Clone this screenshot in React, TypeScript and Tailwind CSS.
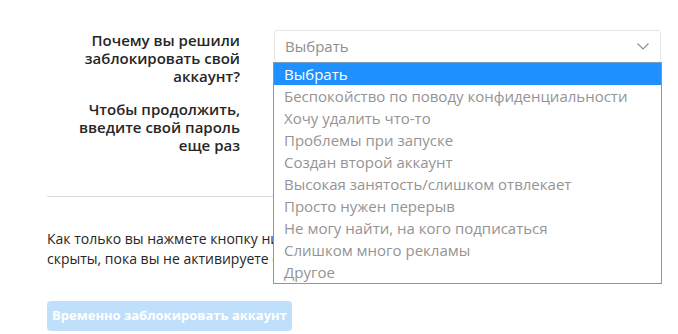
import React from "react";

const options = [
  "Выбрать",
  "Беспокойство по поводу конфиденциальности",
  "Хочу удалить что-то",
  "Проблемы при запуске",
  "Создан второй аккаунт",
  "Высокая занятость/слишком отвлекает",
  "Просто нужен перерыв",
  "Не могу найти, на кого подписаться",
  "Слишком много рекламы",
  "Другое",
];

const App: React.FC = () => {
  return (
    <div
      className="relative w-[678px] h-[334px] bg-white overflow-hidden text-[#262626]"
      style={{ fontFamily: '"Open Sans", "Noto Sans", sans-serif' }}
    >
      <div className="pl-[47px] pt-[30px]">
        <div className="flex">
          <div className="w-[194px] shrink-0 pr-[1px] text-right text-[15px] font-semibold leading-[18px] pt-[1px]">
            Почему вы решили заблокировать свой аккаунт?
          </div>
          <div className="relative ml-[33px] w-[387px] shrink-0">
            <div className="h-[33px] border border-[#e6e6e6] rounded-[3px] flex items-center justify-between pl-[10px] pr-[11px] text-[15px] text-[#8e8e8e]">
              <span>Выбрать</span>
              <svg width="12" height="7" viewBox="0 0 12 7" fill="none">
                <path d="M0.5 0.5l5.5 5.5 5.5-5.5" stroke="#8e8e8e" strokeWidth="1.1" />
              </svg>
            </div>
          </div>
        </div>
        <div className="flex mt-[15px]">
          <div className="w-[194px] shrink-0 pr-[1px] text-right text-[15px] font-semibold leading-[18px]">
            Чтобы продолжить, введите свой пароль еще раз
          </div>
        </div>
        <div className="w-[600px] mt-[42px] border-t border-[#dbdbdb]" />
        <div className="mt-[32px] text-[14px] leading-[20px] whitespace-nowrap">
          <div>Как только вы нажмете кнопку ниже, ваши фото, комментарии и отметки</div>
          <div>скрыты, пока вы не активируете свой аккаунт, выполнив вход.</div>
        </div>
        <button className="block mt-[32px] h-[30px] w-[245px] rounded-[4px] bg-[#c0dffb] text-white text-[13px] font-bold">
          Временно заблокировать аккаунт
        </button>
      </div>

      <div className="absolute z-10 left-[273px] top-[62px] w-[389px] border border-[#7a9cbc] bg-white text-[15px] text-[#949494]">
        {options.map((o, i) => (
          <div
            key={o}
            className={
              i === 0
                ? "h-[22px] leading-[22px] pl-[10px] bg-[#1e90ff] text-white"
                : "h-[22px] leading-[22px] pl-[10px]"
            }
          >
            {o}
          </div>
        ))}
      </div>
    </div>
  );
};

export default App;
